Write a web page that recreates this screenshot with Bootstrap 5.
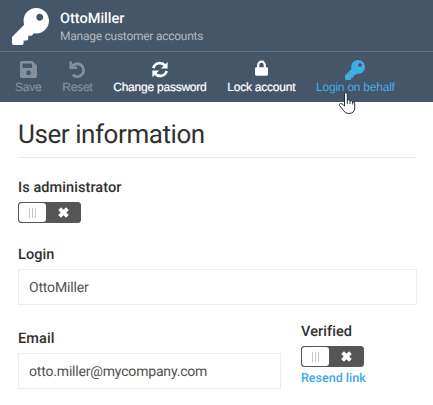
<!DOCTYPE html>
<html lang="en">
<head>
<meta charset="utf-8">
<meta name="viewport" content="width=device-width, initial-scale=1">
<title>User information</title>
<link href="https://cdn.jsdelivr.net/npm/bootstrap@5.3.0/dist/css/bootstrap.min.css" rel="stylesheet">
<style>
body{font-family:Roboto,sans-serif;color:#303030;height:405px;overflow:hidden;background:#fff;text-rendering:geometricPrecision}
.top-area{background:#465669;height:102px}
.title-bar{height:52px;padding:8px 0 0 12px;border-bottom:1px solid #5f6f82}
.title-bar svg{width:37px;height:37px;margin-right:11px}
.user-name{font-size:14.5px;font-weight:500;line-height:20px;padding-top:1px;color:#fff}
.subtitle{font-size:12px;line-height:15px;color:#b5b7ba;letter-spacing:-.25px}
.tools{gap:20.800px;padding:8px 0 0 15px}
.tool{font-family:"Liberation Sans",Arial,sans-serif;font-size:12px;letter-spacing:-.23px;line-height:14px;color:#fff;-webkit-text-stroke:.2px currentColor;white-space:nowrap;text-rendering:geometricPrecision}
.tool svg{display:block;height:20px}
.tool:disabled{color:#85909d;opacity:1}
.tool-active{color:#41ade7;-webkit-text-stroke:0}
.form-area{padding:17px 16px 0 18px}
h1{font-size:26px;font-weight:400;line-height:32px;height:39px;border-bottom:1px solid #e9e9ed;letter-spacing:-.43px;margin-bottom:20px}
.field-label{display:block;font-size:14.5px;font-weight:500;line-height:20px;letter-spacing:.08px}
.text-field{height:36px;border:1px solid #ececf1;border-radius:0;font-size:14px;color:#505050;padding:2px 10px 0;margin-top:4px;letter-spacing:-.18px;text-rendering:geometricPrecision}
.switch-box{width:63px;height:21px;margin-top:4px;border:1px solid #555;border-radius:3px;background:#555;color:#fff}
.switch-grip{width:27px;height:19px;background:#fff;border-radius:3px;gap:2px}
.switch-grip i{width:1px;height:10px;background:#c5c5c5}
.login-row{margin-top:22px}
.email-row{margin-top:17px}
.email-col{width:263px;padding-top:7px}
.verified-col{margin-left:20px}
.resend{display:block;font-size:12.500px;font-weight:500;line-height:16px;margin-top:4px;color:#3caae4}
.pointer{left:338px;top:91px;width:18px;height:24px}
</style>
<script src="https://cdn.jsdelivr.net/npm/bootstrap@5.3.0/dist/js/bootstrap.bundle.min.js"></script>
</head>
<body class="position-relative">
<svg class="d-none">
<symbol id="key" viewBox="0 0 512 512"><path fill="currentColor" d="M512 176.001C512 273.203 433.202 352 336 352c-11.220 0-22.190-1.062-32.827-3.069l-24.012 27.014A23.999 23.999 0 0 1 261.223 384H224v40c0 13.255-10.745 24-24 24h-40v40c0 13.255-10.745 24-24 24H24c-13.255 0-24-10.745-24-24v-78.059c0-6.365 2.529-12.470 7.029-16.971l161.802-161.802C163.108 213.814 160 195.271 160 176 160 78.798 238.797.001 335.999 0 433.488-.001 512 78.511 512 176.001zM336 128c0 26.510 21.490 48 48 48s48-21.490 48-48-21.490-48-48-48-48 21.490-48 48z"/></symbol>
<symbol id="cross" viewBox="0 0 10 10"><path d="M2 2l6 6M8 2l-6 6" stroke="currentColor" stroke-width="3"/></symbol>
</svg>
<header class="top-area">
<div class="title-bar d-flex align-items-start text-white">
<svg><use href="#key"/></svg>
<div><div class="user-name">OttoMiller</div><div class="subtitle">Manage customer accounts</div></div>
</div>
<nav class="tools d-flex">
<button class="tool btn p-0 border-0 d-flex flex-column align-items-center" disabled>
<svg width="17" height="20" viewBox="0 0 17 20"><path fill="currentColor" fill-rule="evenodd" d="M2 1h10.500L17 5.500v10.500a2 2 0 0 1-2 2H2a2 2 0 0 1-2-2v-13a2 2 0 0 1 2-2zM2.500 3.500v4.500h9.500V3.500zM8.500 10.500a2.400 2.400 0 1 0 .01 0z"/></svg>Save</button>
<button class="tool btn p-0 border-0 d-flex flex-column align-items-center" disabled>
<svg width="17" height="20" viewBox="0 0 17 20" fill="none" stroke="currentColor"><path stroke-width="2.800" d="M3 6.500a6.400 6.400 0 1 1 .8 8.300"/><path stroke-width="2.400" d="M1.700 1.500v6.300h6.300"/></svg>Reset</button>
<button class="tool btn p-0 border-0 d-flex flex-column align-items-center">
<svg width="18" height="20" viewBox="0 0 18 21"><g fill="none" stroke="currentColor" stroke-width="2.800"><path d="M2 8.500A7 6.800 0 0 1 14.400 6M16 11.500A7 6.800 0 0 1 3.600 14"/></g><path fill="currentColor" d="M17 2v7h-7zM1 18v-7h7z"/></svg>Change password</button>
<button class="tool btn p-0 border-0 d-flex flex-column align-items-center">
<svg width="13" height="20" viewBox="0 0 13 20"><path d="M3.200 9V5a3.300 3.300 0 0 1 6.600 0V9" fill="none" stroke="currentColor" stroke-width="2.200"/><rect y="7.200" width="13" height="8.500" rx="1.400" fill="currentColor"/></svg>Lock account</button>
<button class="tool tool-active btn p-0 border-0 d-flex flex-column align-items-center">
<svg width="20" height="20"><use href="#key"/></svg>Login on behalf</button>
</nav>
</header>
<main class="form-area">
<h1>User information</h1>
<span class="field-label">Is administrator</span>
<div class="switch-box d-flex"><div class="switch-grip d-flex align-items-center justify-content-center"><i></i><i></i><i></i></div><div class="flex-fill d-flex align-items-center justify-content-center"><svg width="13" height="13"><use href="#cross"/></svg></div></div>
<div class="login-row"><label class="field-label" for="login">Login</label>
<input class="text-field form-control" id="login" value="OttoMiller"></div>
<div class="email-row d-flex">
<div class="email-col"><label class="field-label" for="email">Email</label><input class="text-field form-control" id="email" value="otto.miller@mycompany.com"></div>
<div class="verified-col"><span class="field-label">Verified</span>
<div class="switch-box d-flex"><div class="switch-grip d-flex align-items-center justify-content-center"><i></i><i></i><i></i></div><div class="flex-fill d-flex align-items-center justify-content-center"><svg width="13" height="13"><use href="#cross"/></svg></div></div>
<a class="resend text-decoration-none" href="#">Resend link</a></div>
</div>
</main>
<svg class="pointer position-absolute" viewBox="0 0 18 24"><path d="M6.500 14V3.200Q6.500 1.500 7.900 1.500T9.300 3.200V9Q12 7.500 12 10q2.500-1.300 2.700 1 2-.7 2 1.500v4q0 6-6 6-3.500 0-5-2.700L1.600 14.500Q1 13 2.500 12.500 4 12.200 6.500 15z" fill="#fff" stroke="#222d39"/><path d="M9.300 9v4M12 10v3M14.700 11v2.500" stroke="#222d39" fill="none"/></svg>
</body>
</html>
